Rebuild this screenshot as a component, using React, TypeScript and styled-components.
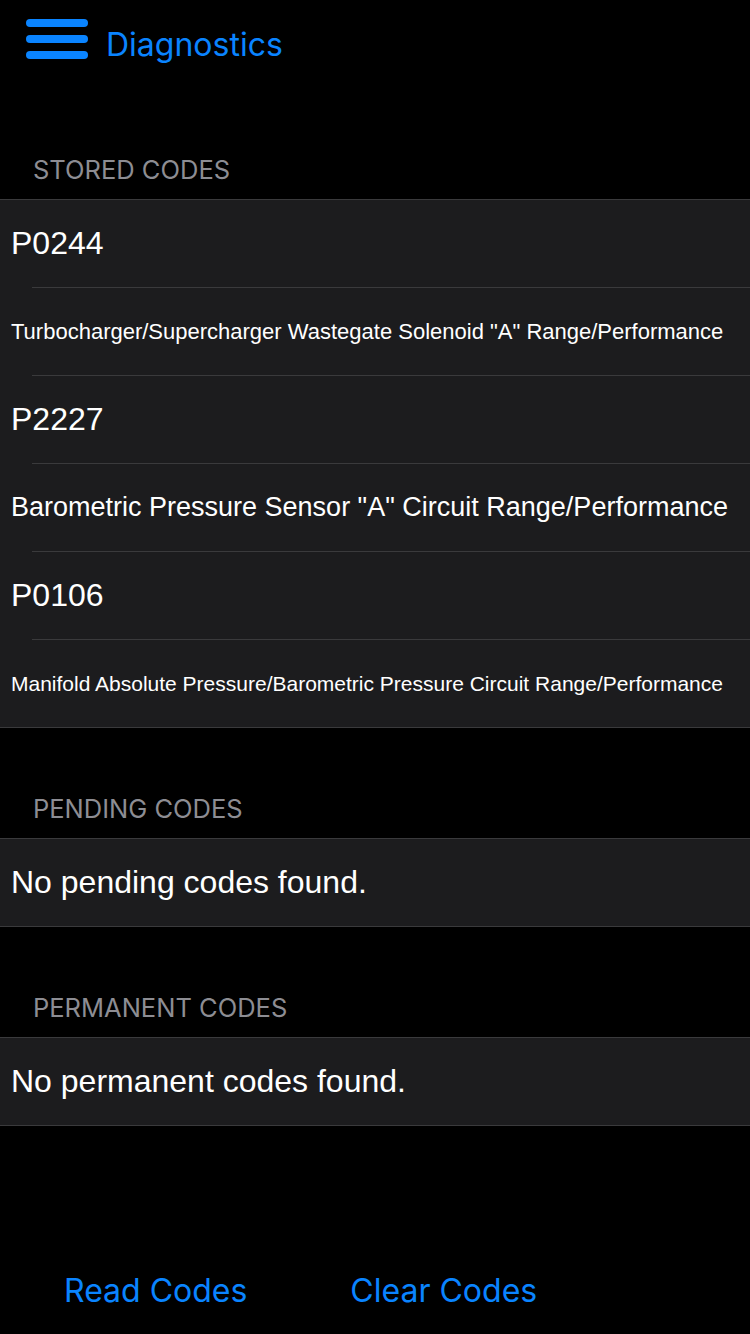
import React from 'react';
import styled, { createGlobalStyle } from 'styled-components';

const GlobalStyle = createGlobalStyle`
  html, body {
    margin: 0;
    padding: 0;
    background: #000;
  }
  body {
    font-family: 'Inter', 'Roboto', sans-serif;
  }
`;

interface Row {
  text: string;
  size: number;
}

const stored: Row[] = [
  { text: 'P0244', size: 32 },
  { text: 'Turbocharger/Supercharger Wastegate Solenoid "A" Range/Performance', size: 22 },
  { text: 'P2227', size: 32 },
  { text: 'Barometric Pressure Sensor "A" Circuit Range/Performance', size: 27 },
  { text: 'P0106', size: 32 },
  { text: 'Manifold Absolute Pressure/Barometric Pressure Circuit Range/Performance', size: 21 },
];

function MenuIcon() {
  return (
    <svg width="62" height="40" viewBox="0 0 62 40">
      <rect x="0" y="0" width="62" height="8" rx="4" fill="#0a84ff" />
      <rect x="0" y="16" width="62" height="8" rx="4" fill="#0a84ff" />
      <rect x="0" y="32" width="62" height="8" rx="4" fill="#0a84ff" />
    </svg>
  );
}

export default function App() {
  return (
    <Page>
      <GlobalStyle />
      <NavBar>
        <MenuIcon />
        <Title>Diagnostics</Title>
      </NavBar>

      <SectionHeader>STORED CODES</SectionHeader>
      <Group>
        {stored.map((row, i) => (
          <Cell key={i} last={i === stored.length - 1}>
            <CellText size={row.size}>{row.text}</CellText>
          </Cell>
        ))}
      </Group>

      <SectionHeader>PENDING CODES</SectionHeader>
      <Group>
        <Cell last>
          <CellText size={32}>No pending codes found.</CellText>
        </Cell>
      </Group>

      <SectionHeader>PERMANENT CODES</SectionHeader>
      <Group>
        <Cell last>
          <CellText size={32}>No permanent codes found.</CellText>
        </Cell>
      </Group>

      <Spacer />

      <Toolbar>
        <ToolButton>Read Codes</ToolButton>
        <ToolButton>Clear Codes</ToolButton>
      </Toolbar>
    </Page>
  );
}

const Page = styled.div`
  display: flex;
  flex-direction: column;
  min-height: 1334px;
  background: #000;
`;

const NavBar = styled.div`
  height: 89px;
  display: flex;
  align-items: center;
  gap: 18px;
  padding-left: 26px;
  box-sizing: border-box;

  svg {
    margin-bottom: 11px;
  }
`;

const Title = styled.div`
  font-family: 'Inter', 'Roboto', sans-serif;
  font-size: 32px;
  color: #0a84ff;
`;

const SectionHeader = styled.div`
  height: 110px;
  display: flex;
  align-items: flex-end;
  padding: 0 0 14px 33px;
  box-sizing: border-box;
  font-family: 'Inter', 'Roboto', sans-serif;
  font-size: 25.5px;
  color: #8d8d93;
`;

const Group = styled.div`
  background: #1c1c1e;
  border-top: 1px solid #3a3a3c;
  border-bottom: 1px solid #3a3a3c;
`;

const Cell = styled.div<{ last?: boolean }>`
  height: ${({ last }) => (last ? '87px' : '88px')};
  display: flex;
  align-items: center;
  box-sizing: border-box;
  border-bottom: ${({ last }) => (last ? 'none' : '1px solid #3a3a3c')};
  margin-left: ${({ last }) => (last ? '0' : '32px')};
  padding-left: ${({ last }) => (last ? '11px' : '0')};

  & > span {
    margin-left: ${({ last }) => (last ? '0' : '-21px')};
  }
`;

const CellText = styled.span<{ size: number }>`
  font-family: 'Liberation Sans', Arial, sans-serif;
  font-size: ${({ size }) => size}px;
  color: #fff;
  white-space: nowrap;
`;

const Spacer = styled.div`
  flex: 1;
`;

const Toolbar = styled.div`
  height: 88px;
  display: flex;
  align-items: center;
  gap: 103px;
  padding-left: 64px;
`;

const ToolButton = styled.button`
  background: none;
  border: none;
  padding: 0;
  font-family: 'Inter', 'Roboto', sans-serif;
  font-size: 32px;
  color: #0a84ff;
  cursor: pointer;
`;
